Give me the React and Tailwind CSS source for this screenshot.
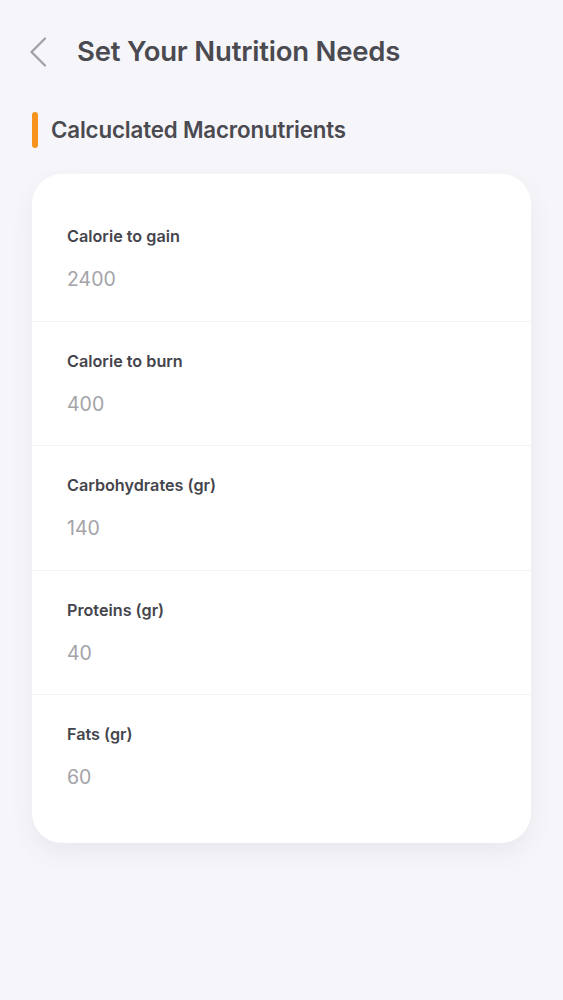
const rows = [
  { label: 'Calorie to gain', value: '2400' },
  { label: 'Calorie to burn', value: '400' },
  { label: 'Carbohydrates (gr)', value: '140' },
  { label: 'Proteins (gr)', value: '40' },
  { label: 'Fats (gr)', value: '60' },
];

const BackChevron = () => (
  <svg width="20" height="32" viewBox="0 0 20 32" fill="none" className="shrink-0">
    <path d="M17 2.5 L3.5 16 L17 29.5" stroke="#a2a2a8" strokeWidth="2.4" strokeLinecap="round" strokeLinejoin="round" />
  </svg>
);

const App = () => {
  return (
    <div className="min-h-[1000px] bg-[#f6f6fa] font-['Inter',sans-serif]">
      <header className="flex items-center h-[104px] pl-[28px]">
        <BackChevron />
        <h1 className="ml-[29px] text-[27.5px] font-semibold text-[#4a4a50] tracking-[-0.2px]">
          Set Your Nutrition Needs
        </h1>
      </header>

      <div className="flex items-center pl-[32px] h-[52px]">
        <span className="w-[6px] h-[36px] rounded-full bg-[#f7931e]" />
        <h2 className="ml-[13px] text-[22.3px] font-semibold text-[#4a4a50] tracking-[-0.15px]">
          Calcuclated Macronutrients
        </h2>
      </div>

      <div className="mx-[32px] mt-[18px] w-[499px] bg-white rounded-[30px] py-[23px] shadow-[0_10px_24px_rgba(40,40,80,0.07)]">
        {rows.map((row, i) => (
          <div
            key={row.label}
            className={`h-[124.6px] pl-[35px] pt-[29px] ${i < rows.length - 1 ? 'border-b border-[#f3f3f6]' : ''}`}
          >
            <p className="h-[20px] leading-[20px] text-[16.2px] font-semibold text-[#45454d]">{row.label}</p>
            <p className="mt-[21px] h-[24px] leading-[24px] text-[19.5px] text-[#a3a3a8]">{row.value}</p>
          </div>
        ))}
      </div>
    </div>
  );
};

export default App;
